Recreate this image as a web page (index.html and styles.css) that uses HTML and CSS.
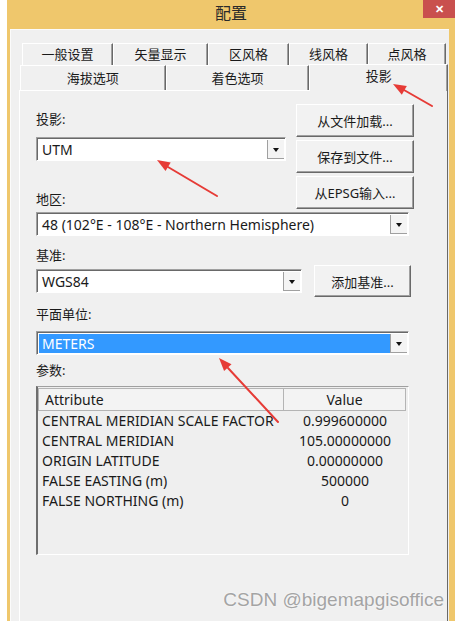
FILE: index.html
```html
<!DOCTYPE html>
<html lang="zh">
<head>
    <meta charset="UTF-8">
    <title>配置</title>
    <link rel="stylesheet" href="styles.css">
</head>
<body>

<div class="window">
    <div class="titlebar">
        <span></span>
        <div class="title">配置</div>
        <div class="close">✕</div>
    </div>

    <div class="client">
        <div class="tabs">
            <div class="tab-row row1">
                <div class="tab" style="width: 91px">一般设置</div>
                <div class="tab" style="width: 95px">矢量显示</div>
                <div class="tab" style="width: 81px">区风格</div>
                <div class="tab" style="width: 79px">线风格</div>
                <div class="tab" style="width: 78px">点风格</div>
            </div>
            <div class="tab-row row2">
                <div class="tab" style="width: 146px">海拔选项</div>
                <div class="tab" style="width: 144px">着色选项</div>
                <div class="tab active" style="width: 139px">投影</div>
            </div>
        </div>

        <div class="panel">
            <div class="top-section">
                <div class="left-col">
                    <div class="label first">投影:</div>
                    <div class="combo combo-utm">
                        <span class="combo-text">UTM</span>
                        <span class="drop"></span>
                    </div>
                    <div class="label region-label">地区:</div>
                </div>
                <div class="right-col">
                    <div class="button">从文件加载...</div>
                    <div class="button">保存到文件...</div>
                    <div class="button">从EPSG输入...</div>
                </div>
            </div>

            <div class="combo combo-long region">
                <span class="combo-text">48 (102°E - 108°E - Northern Hemisphere)</span>
                <span class="drop"></span>
            </div>

            <div class="label datum-label">基准:</div>
            <div class="datum-row">
                <div class="combo combo-datum">
                    <span class="combo-text">WGS84</span>
                    <span class="drop"></span>
                </div>
                <div class="button button-datum">添加基准...</div>
            </div>

            <div class="label unit-label">平面单位:</div>
            <div class="combo combo-long units">
                <span class="combo-text selected">METERS</span>
                <span class="drop"></span>
            </div>

            <div class="label param-label">参数:</div>
            <div class="list">
                <div class="list-head">
                    <div class="head-cell attr">Attribute</div>
                    <div class="head-cell value">Value</div>
                </div>
                <div class="list-row"><span class="attr">CENTRAL MERIDIAN SCALE FACTOR</span><span class="value">0.999600000</span></div>
                <div class="list-row"><span class="attr">CENTRAL MERIDIAN</span><span class="value">105.00000000</span></div>
                <div class="list-row"><span class="attr">ORIGIN LATITUDE</span><span class="value">0.00000000</span></div>
                <div class="list-row"><span class="attr">FALSE EASTING (m)</span><span class="value">500000</span></div>
                <div class="list-row"><span class="attr">FALSE NORTHING (m)</span><span class="value">0</span></div>
            </div>
        </div>
    </div>
</div>

<svg class="arrows" width="459" height="621" viewBox="0 0 459 621">
    <g stroke="#e63b36" stroke-width="2" stroke-linecap="round">
        <line x1="432" y1="106" x2="404" y2="90"/>
        <line x1="217" y1="196" x2="168" y2="167"/>
        <line x1="278" y1="422" x2="228" y2="368"/>
    </g>
    <g fill="#e63b36">
        <polygon points="393,84 406.8,86 401.8,94.8"/>
        <polygon points="157,160 170.7,162.4 165.5,171"/>
        <polygon points="219,358 231.5,364.2 224.1,371"/>
    </g>
</svg>

<div class="watermark">CSDN @bigemapgisoffice</div>

</body>
</html>
```

FILE: styles.css
```css
body {
    margin: 0;
    background-color: #fff;
    font-family: "Noto Sans", "Noto Sans CJK SC", sans-serif;
    font-size: 13px;
    color: #1a1a1a;
    height: 621px;
    overflow: hidden;
    position: relative;
}
.window {
    margin-left: 7px;
    width: 448px;
    height: 640px;
    background-color: #efc76c;
}
.titlebar {
    height: 29px;
    display: grid;
    grid-template-columns: 1fr auto 1fr;
    align-items: start;
}
.title {
    font-size: 16px;
    line-height: 26px;
    color: #2a2a2a;
}
.close {
    justify-self: end;
    width: 32px;
    height: 18px;
    background-color: #c9504e;
    color: #fff;
    font-size: 11px;
    font-weight: bold;
    line-height: 18px;
    text-align: center;
}
.client {
    margin: 0 6px 0 3px;
    height: 611px;
    background-color: #f0f0f0;
    border-left: 1px solid #fbfbfb;
    border-top: 1px solid #fbfbfb;
    padding: 13px 0 0 8px;
    box-sizing: border-box;
}
.tabs {
    width: 429px;
}
.tab-row {
    display: flex;
}
.row1 {
    height: 22px;
    padding-left: 3px;
}
.row2 {
    height: 25px;
    padding-left: 1px;
    align-items: flex-end;
}
.tab {
    box-sizing: border-box;
    height: 100%;
    background-color: #f0f0f0;
    border-top: 1px solid #fff;
    border-left: 1px solid #fff;
    border-right: 1px solid #696969;
    box-shadow: inset -1px 0 #a0a0a0;
    text-align: center;
    line-height: 21px;
    color: #1a1a1a;
}
.row2 .tab {
    line-height: 24px;
}
.row2 .tab.active {
    height: 27px;
    margin-bottom: -1px;
    line-height: 22px;
    position: relative;
}
.panel {
    width: 429px;
    height: 540px;
    box-sizing: border-box;
    background-color: #f0f0f0;
    border-top: 1px solid #fff;
    border-left: 1px solid #fff;
    border-right: 1px solid #696969;
    padding: 13px 0 0 16px;
}
.label {
    height: 16px;
    line-height: 16px;
    color: #1a1a1a;
}
.top-section {
    display: flex;
    gap: 10px;
}
.left-col {
    width: 250px;
}
.label.first {
    margin-top: 7px;
}
.combo-utm {
    margin-top: 10px;
    width: 250px;
}
.region-label {
    margin-top: 30px;
}
.right-col {
    display: flex;
    flex-direction: column;
    gap: 3px;
}
.button {
    box-sizing: border-box;
    width: 118px;
    height: 33px;
    background-color: #f2f2f2;
    border-top: 1px solid #fff;
    border-left: 1px solid #fff;
    border-right: 1px solid #696969;
    border-bottom: 1px solid #696969;
    box-shadow: inset -1px -1px #a0a0a0;
    display: flex;
    align-items: center;
    justify-content: center;
    color: #1a1a1a;
}
.combo {
    box-sizing: border-box;
    height: 24px;
    display: flex;
    background-color: #fff;
    border-top: 1px solid #a0a0a0;
    border-left: 1px solid #a0a0a0;
    border-right: 1px solid #fff;
    border-bottom: 1px solid #fff;
    box-shadow: inset 1px 1px #696969;
    padding: 2px 1px 1px 2px;
}
.combo-text {
    flex: 1;
    font-size: 14px;
    line-height: 19px;
    padding-left: 3px;
    white-space: nowrap;
}
.combo-text.selected {
    background-color: #3399ff;
    color: #fff;
}
.drop {
    width: 17px;
    box-sizing: border-box;
    background-color: #f4f4f4;
    border-left: 1px solid #a0a0a0;
    border-bottom: 1px solid #a0a0a0;
    position: relative;
}
.drop::after {
    content: "";
    position: absolute;
    left: 5px;
    top: 8px;
    border-left: 3.5px solid transparent;
    border-right: 3.5px solid transparent;
    border-top: 4px solid #111;
}
.combo-long {
    width: 373px;
}
.region {
    margin-top: 3px;
}
.datum-label {
    margin-top: 11px;
}
.datum-row {
    margin-top: 2px;
    display: flex;
    align-items: center;
    gap: 12px;
}
.combo-datum {
    width: 266px;
}
.button-datum {
    width: 97px;
    height: 32px;
}
.unit-label {
    margin-top: 9px;
}
.units {
    margin-top: 9px;
}
.param-label {
    margin-top: 7px;
}
.list {
    margin-top: 8px;
    width: 373px;
    height: 169px;
    box-sizing: border-box;
    border-top: 1px solid #a0a0a0;
    border-left: 2px solid #6e6e6e;
    border-right: 1px solid #fff;
    border-bottom: 1px solid #fff;
    padding: 1px 2px 0 0;
    background-color: #efefef;
    font-size: 14px;
}
.list-head {
    display: flex;
    height: 23px;
    box-sizing: border-box;
    border: 1px solid #b4b4b4;
    background-color: #f3f3f3;
}
.head-cell {
    line-height: 21px;
}
.head-cell.attr {
    width: 245px;
    padding-left: 6px;
    box-sizing: border-box;
    border-right: 1px solid #b4b4b4;
}
.head-cell.value {
    flex: 1;
    text-align: center;
}
.list-row {
    display: flex;
    height: 20px;
    line-height: 20px;
}
.list-row:first-of-type {
    margin-top: 1px;
}
.list-row .attr {
    width: 246px;
    padding-left: 4px;
    box-sizing: border-box;
    white-space: nowrap;
}
.list-row .value {
    flex: 1;
    text-align: center;
}
.arrows {
    position: absolute;
    left: 0;
    top: 0;
    pointer-events: none;
}
.watermark {
    position: absolute;
    right: 15px;
    top: 589px;
    font-family: "Liberation Sans", Arial, sans-serif;
    font-size: 19px;
    color: #a4a4a4;
    text-shadow: 0 0 2px #fff;
}
```
